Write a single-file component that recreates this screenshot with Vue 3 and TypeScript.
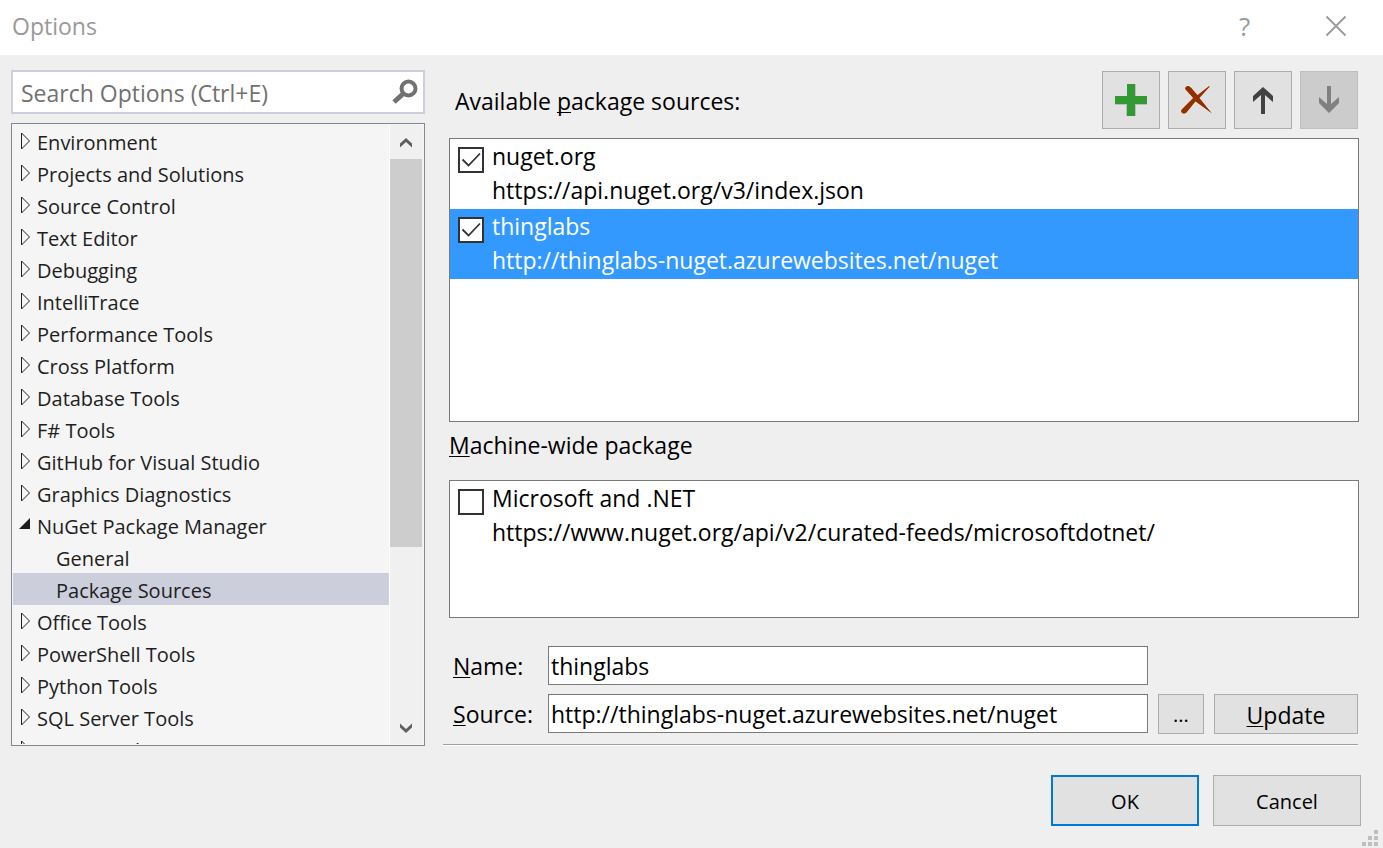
<script setup lang="ts">
import { ref } from 'vue'

interface TreeItem {
  label: string
  kind: 'closed' | 'open' | 'child'
  selected?: boolean
}

interface PackageSource {
  id: string
  name: string
  url: string
  enabled: boolean
  selected?: boolean
}

const tree: TreeItem[] = [
  { label: 'Environment', kind: 'closed' },
  { label: 'Projects and Solutions', kind: 'closed' },
  { label: 'Source Control', kind: 'closed' },
  { label: 'Text Editor', kind: 'closed' },
  { label: 'Debugging', kind: 'closed' },
  { label: 'IntelliTrace', kind: 'closed' },
  { label: 'Performance Tools', kind: 'closed' },
  { label: 'Cross Platform', kind: 'closed' },
  { label: 'Database Tools', kind: 'closed' },
  { label: 'F# Tools', kind: 'closed' },
  { label: 'GitHub for Visual Studio', kind: 'closed' },
  { label: 'Graphics Diagnostics', kind: 'closed' },
  { label: 'NuGet Package Manager', kind: 'open' },
  { label: 'General', kind: 'child' },
  { label: 'Package Sources', kind: 'child', selected: true },
  { label: 'Office Tools', kind: 'closed' },
  { label: 'PowerShell Tools', kind: 'closed' },
  { label: 'Python Tools', kind: 'closed' },
  { label: 'SQL Server Tools', kind: 'closed' },
  { label: 'Text Templating', kind: 'closed' },
]

const available = ref<PackageSource[]>([
  { id: 'src-nuget', name: 'nuget.org', url: 'https://api.nuget.org/v3/index.json', enabled: true },
  {
    id: 'src-thinglabs',
    name: 'thinglabs',
    url: 'http://thinglabs-nuget.azurewebsites.net/nuget',
    enabled: true,
    selected: true,
  },
])

const machineWide = ref<PackageSource[]>([
  {
    id: 'src-microsoft',
    name: 'Microsoft and .NET',
    url: 'https://www.nuget.org/api/v2/curated-feeds/microsoftdotnet/',
    enabled: false,
  },
])

const search = ref('')
const name = ref('thinglabs')
const source = ref('http://thinglabs-nuget.azurewebsites.net/nuget')
</script>

<template>
  <div class="dialog">
    <header class="titlebar">
      <h1>Options</h1>
      <button class="caption help" type="button" aria-label="Help">?</button>
      <button class="caption" type="button" aria-label="Close">
        <svg width="22" height="22" viewBox="0 0 22 22" fill="none" stroke="#999" stroke-width="1.8">
          <path d="M1.5 1.5 20.500 20.500M20.500 1.500 1.500 20.500" />
        </svg>
      </button>
    </header>

    <main class="content">
      <section class="sidebar">
        <div class="search">
          <input v-model="search" type="text" aria-label="Search Options" placeholder="Search Options (Ctrl+E)" />
          <button type="button" aria-label="Search">
            <svg width="28" height="28" viewBox="0 0 28 28" fill="none" stroke="#717171">
              <circle cx="17.500" cy="10.500" r="7" stroke-width="4" />
              <path d="M12.500 15.500 3 24" stroke-width="5" />
            </svg>
          </button>
        </div>

        <div class="tree">
          <ul role="tree">
            <li
              v-for="item in tree"
              :key="item.label"
              role="treeitem"
              :class="[item.kind, { selected: item.selected }]"
            >
              <svg v-if="item.kind === 'closed'" class="arrow" width="12" height="20" viewBox="0 0 12 20">
                <path d="M2.500 2v16L10.500 10z" fill="none" stroke="#1e1e1e" />
              </svg>
              <svg v-else-if="item.kind === 'open'" class="arrow" width="12" height="20" viewBox="0 0 12 20">
                <path d="M11 3v11H0z" fill="#1e1e1e" />
              </svg>
              <span>{{ item.label }}</span>
            </li>
          </ul>
          <div class="scrollbar">
            <svg width="14" height="34" viewBox="0 0 14 34">
              <path d="M1 22.500v-4L7 13l6 5.500v4L7 17z" fill="#606060" />
            </svg>
            <div class="track"><div class="thumb"></div></div>
            <svg width="14" height="34" viewBox="0 0 14 34">
              <path d="M1 13.500v4L7 23l6-5.500v-4L7 19z" fill="#606060" />
            </svg>
          </div>
        </div>
      </section>

      <section class="page">
        <div class="toolbar">
          <h2>Available <u>p</u>ackage sources:</h2>
          <button type="button" aria-label="Add">
            <svg width="36" height="36" viewBox="0 0 36 36">
              <path d="M15 2h8v12h11v9H23v11h-1V22H2v1h11v11h1V3z" fill="#bcbcc4" />
              <path d="M14 2h8v12h12v8H22v12h-8V22H2v-8h12z" fill="#393" />
            </svg>
          </button>
          <button type="button" aria-label="Remove">
            <svg width="36" height="36" viewBox="0 0 36 36">
              <path
                d="M6 7C6 3.500 10 3 12 5.500L18.500 13 30 4l1 .5L20.500 16 33.500 32 16.500 19.500 8 30C5 34 0 30 3 27L14 16z"
                fill="#933000"
                stroke="#fff"
                stroke-width="1"
                stroke-linejoin="round"
                paint-order="stroke"
              />
            </svg>
          </button>
          <button type="button" aria-label="Move up">
            <svg width="36" height="36" viewBox="0 0 36 36">
              <path d="M18 5 28 14v6l-8-7v19h-4V13l-8 7v-6z" fill="#424242" />
            </svg>
          </button>
          <button type="button" aria-label="Move down" disabled>
            <svg width="36" height="36" viewBox="0 0 36 36">
              <path d="M18 31 8 21v-6l8 7V4h4v18l8-7v6z" fill="#808080" />
            </svg>
          </button>
        </div>

        <ul class="sources grow">
          <li v-for="s in available" :key="s.id" :class="{ selected: s.selected }">
            <span class="check">
              <input :id="s.id" v-model="s.enabled" type="checkbox" />
              <svg v-if="s.enabled" width="26" height="26" viewBox="0 0 26 26">
                <path d="M4.500 12.500 10.500 18.500 22 6.500" fill="none" stroke="#333" stroke-width="1.800" />
              </svg>
            </span>
            <label :for="s.id">
              <span>{{ s.name }}</span>
              <span>{{ s.url }}</span>
            </label>
          </li>
        </ul>

        <h2 class="machine"><u>M</u>achine-wide package</h2>
        <ul class="sources short">
          <li v-for="s in machineWide" :key="s.id">
            <span class="check">
              <input :id="s.id" v-model="s.enabled" type="checkbox" />
              <svg v-if="s.enabled" width="26" height="26" viewBox="0 0 26 26">
                <path d="M4.500 12.500 10.500 18.500 22 6.500" fill="none" stroke="#333" stroke-width="1.800" />
              </svg>
            </span>
            <label :for="s.id">
              <span>{{ s.name }}</span>
              <span>{{ s.url }}</span>
            </label>
          </li>
        </ul>

        <form class="edit" @submit.prevent>
          <label for="source-name"><u>N</u>ame:</label>
          <input id="source-name" v-model="name" type="text" />
          <label for="source-url"><u>S</u>ource:</label>
          <input id="source-url" v-model="source" type="text" />
          <button type="button" class="browse" aria-label="Browse">...</button>
          <button type="submit"><span><u>U</u>pdate</span></button>
        </form>
        <hr />
      </section>
    </main>

    <footer class="footer">
      <button type="button" class="default">OK</button>
      <button type="button">Cancel</button>
      <svg class="grip" width="16" height="16" viewBox="0 0 16 16" fill="#bfbfbf">
        <path d="M12 0h4v4h-4zM6 6h4v4H6zM12 6h4v4h-4zM0 12h4v4H0zM6 12h4v4H6zM12 12h4v4h-4z" />
      </svg>
    </footer>
  </div>
</template>

<style>
body {
  margin: 0;
}
</style>

<style scoped>
.dialog {
  display: flex;
  flex-direction: column;
  height: 100vh;
  background: #efefef;
  color: #000;
  font-family: 'Open Sans', 'Noto Sans', sans-serif;
  font-size: 23px;
  line-height: 34px;
}

.dialog * {
  box-sizing: border-box;
}

h1,
h2,
ul {
  margin: 0;
  padding: 0;
  font-size: 23px;
  font-weight: 400;
  list-style: none;
}

button,
input {
  margin: 0;
  padding: 0;
  color: inherit;
  font: inherit;
  border-radius: 0;
}

button {
  display: flex;
  align-items: center;
  justify-content: center;
  background: #e1e1e1;
  border: 1px solid #adadad;
}

button:disabled {
  background: #ccc;
  border-color: #bfbfbf;
}

u {
  text-decoration-thickness: 1px;
  text-underline-offset: 2px;
  text-decoration-skip-ink: none;
}

svg {
  display: block;
  flex: none;
}

.titlebar {
  display: flex;
  align-items: center;
  height: 55px;
  padding: 0 2px 3px 12px;
  background: #fff;
  color: #999;
}

.titlebar h1 {
  flex: 1;
}

.caption {
  width: 91px;
  height: 52px;
  background: none;
  border: 0;
}

.help {
  font-size: 26px;
}

.content {
  display: grid;
  grid-template-columns: 414px 1fr;
  grid-template-rows: 100%;
  gap: 18px;
  flex: 1;
  min-height: 0;
  padding: 15px 24px 0 11px;
}

.sidebar {
  display: flex;
  flex-direction: column;
  gap: 9px;
  min-height: 0;
}

.search {
  display: flex;
  align-items: center;
  height: 44px;
  background: #fff;
  border: 2px solid #cccedb;
}

.search input {
  flex: 1;
  min-width: 0;
  padding: 2px 0 0 8px;
  background: none;
  border: 0;
  outline: 0;
}

.search input::placeholder {
  color: #717171;
  opacity: 1;
}

.search button {
  padding: 0 4px 0 0;
  background: none;
  border: 0;
}

.tree {
  display: flex;
  flex: 1;
  min-height: 0;
  padding: 1px;
  background: #f5f5f5;
  border: 1px solid #828790;
}

.tree ul {
  flex: 1;
  overflow: hidden;
}

.tree li {
  display: flex;
  align-items: center;
  gap: 6px;
  height: 32px;
  padding-left: 6px;
  color: #1e1e1e;
  font-size: 20px;
  line-height: 28px;
  white-space: nowrap;
}

.tree li span {
  padding-top: 4px;
}

.tree li.child {
  padding-left: 43px;
}

.tree li.selected {
  background: #cccedb;
}

.scrollbar {
  display: flex;
  flex-direction: column;
  align-items: center;
  width: 34px;
  padding-right: 1px;
  background: #f0f0f0;
  border-left: 1px solid #fff;
}

.track {
  flex: 1;
  width: 100%;
}

.thumb {
  height: 70.5%;
  background: #cdcdcd;
}

.page {
  display: flex;
  flex-direction: column;
  min-width: 0;
  min-height: 0;
  padding: 1px 0 0 6px;
}

.toolbar {
  display: flex;
  align-items: center;
  gap: 8px;
  padding: 0 1px 0 6px;
}

.toolbar h2 {
  flex: 1;
  padding-top: 2px;
}

.toolbar button {
  width: 58px;
  height: 58px;
}

.sources {
  background: #fff;
  border: 1px solid #7a7a7a;
  overflow: hidden;
}

.grow {
  flex: 1;
  min-height: 142px;
  margin-top: 9px;
}

.short {
  flex: none;
  height: 138px;
}

.sources li {
  display: flex;
  gap: 8px;
  height: 70px;
  padding-left: 8px;
}

.sources li.selected {
  background: #39f;
  color: #fff;
}

.sources label {
  display: flex;
  flex-direction: column;
  white-space: nowrap;
}

.check {
  display: grid;
  align-self: flex-start;
  padding-top: 8px;
}

.check input {
  grid-area: 1 / 1;
  width: 26px;
  height: 26px;
  appearance: none;
  background: #fff;
  border: 2px solid #333;
}

.check svg {
  grid-area: 1 / 1;
  pointer-events: none;
}

.machine {
  margin: 6px 0 18px;
}

.edit {
  display: grid;
  grid-template-columns: 85px 1fr 46px 144px;
  gap: 9px 10px;
  align-items: start;
  margin-top: 28px;
  padding: 0 1px 0 4px;
}

.edit label {
  grid-column: 1;
  line-height: 41px;
  height: 39px;
}

.edit input {
  min-width: 0;
  height: 39px;
  padding: 1px 2px 0;
  background: #fff;
  border: 1px solid #7a7a7a;
  outline: 0;
}

.edit button {
  height: 40px;
  padding-top: 2px;
}

.edit .browse {
  font-size: 20px;
}

hr {
  flex: none;
  width: auto;
  height: 2px;
  margin: 10px 1px 0 -6px;
  background: #fff;
  border: 0;
  border-top: 1px solid #a0a0a0;
}

.footer {
  position: relative;
  display: flex;
  justify-content: flex-end;
  gap: 14px;
  padding: 29px 22px 22px;
  font-size: 20px;
}

.footer button {
  width: 148px;
  height: 51px;
  padding-top: 2px;
}

.footer .default {
  border: 2px solid #0078d7;
}

.grip {
  position: absolute;
  right: 5px;
  bottom: 2px;
}
</style>
